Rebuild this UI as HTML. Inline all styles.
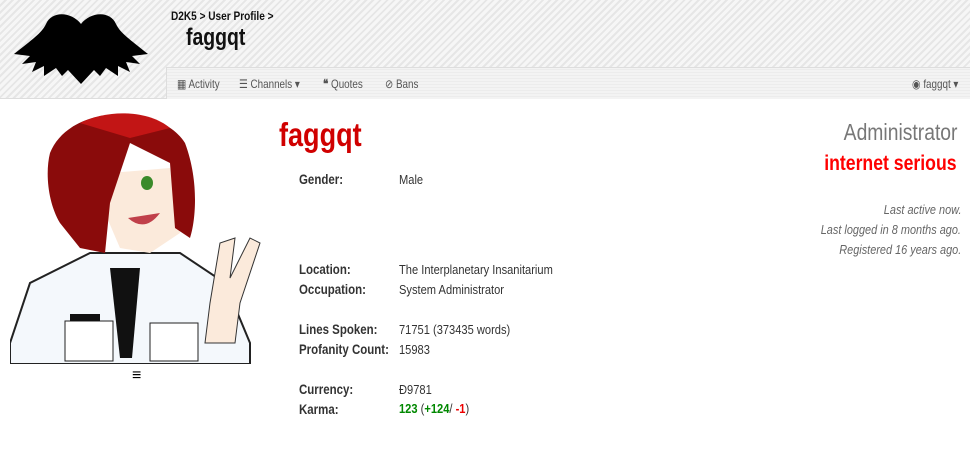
<!DOCTYPE html>
<html><head><meta charset="utf-8"><style>
*{margin:0;padding:0;box-sizing:border-box}
body{width:970px;height:459px;overflow:hidden;background:#fff;font-family:"Liberation Sans",sans-serif;color:#333;position:relative}
.hdr{position:absolute;left:0;top:0;width:970px;height:99px;background:repeating-linear-gradient(135deg,#f6f6f6 0 3px,#e6e6e6 3px 5px);border-bottom:1px solid #ddd}
.nav{position:absolute;left:166px;top:67px;width:804px;height:32px;background:repeating-linear-gradient(0deg,#f3f3f3 0 2px,#ececec 2px 3px);border-top:1px solid #ddd;border-left:1px solid #ddd;font-size:12px;color:#555}
.nav span{position:absolute;top:9px;white-space:nowrap;transform:scaleX(.82);transform-origin:left}
.a{position:absolute;white-space:nowrap;transform:scaleX(.84);transform-origin:left}
.r{transform-origin:right}
.lbl{font-weight:bold;font-size:14px;color:#333;left:299px;transform:scaleX(.82)}
.val{font-size:13px;color:#333;left:399px;transform:scaleX(.855)}
.it{font-style:italic;font-size:13px;color:#666;right:9px;text-align:right}
</style></head><body>
<div class="hdr"></div>
<svg style="position:absolute;left:12px;top:12px" width="138" height="72" viewBox="0 0 138 72">
<path d="M69 12 C60 0 40 -2 34 12 C30 20 25 24 2 42 L18 44 L10 52 L24 50 L20 60 L32 54 L32 64 L44 56 L50 64 L56 58 L69 72 L82 58 L88 64 L94 56 L106 64 L106 54 L118 60 L114 50 L128 52 L120 44 L136 42 C113 24 108 20 104 12 C98 -2 78 0 69 12Z" fill="#000"/>
</svg>
<div class="a" style="left:171px;top:9px;font-size:12px;font-weight:bold;color:#111">D2K5 &gt; User Profile &gt;</div>
<div class="a" style="left:186px;top:24px;font-size:24px;font-weight:bold;color:#111;transform:scaleX(.81)">faggqt</div>
<div class="nav">
<span style="left:10px">▦ Activity</span>
<span style="left:72px">☰ Channels ▾</span>
<span style="left:156px"><b>❝</b> Quotes</span>
<span style="left:218px">⊘ Bans</span>
<span style="left:745px">◉ faggqt ▾</span>
</div>
<svg style="position:absolute;left:10px;top:113px" width="252" height="251" viewBox="0 0 252 251">
<path d="M0 230 L20 170 L80 140 L170 140 L215 170 L240 230 L240 251 L0 251Z" fill="#f4f8fc" stroke="#222" stroke-width="2"/>
<path d="M100 155 L130 155 L122 245 L110 245Z" fill="#111"/>
<rect x="55" y="208" width="48" height="40" fill="#fff" stroke="#222"/>
<rect x="140" y="210" width="48" height="38" fill="#fff" stroke="#222"/>
<rect x="60" y="201" width="30" height="7" fill="#111"/>
<path d="M100 60 L160 55 L170 120 L140 140 L110 135 L95 100Z" fill="#fbeadb"/>
<path d="M40 40 C60 -10 150 -10 175 30 C190 70 185 110 180 125 L165 115 L160 50 L120 30 L100 90 L95 140 L70 135 L50 110 C38 90 35 60 40 40Z" fill="#8a0b0b"/>
<path d="M70 10 C100 -5 140 -2 160 15 L120 25Z" fill="#c21515"/>
<ellipse cx="137" cy="70" rx="6" ry="7" fill="#3a8a2a"/>
<path d="M118 105 Q135 120 150 100Z" fill="#c0404a"/>
<path d="M200 190 L210 130 L225 125 L220 165 L240 125 L250 130 L230 190 L225 230 L195 230Z" fill="#fbeadb" stroke="#333"/>
</svg>
<div class="a" style="left:132px;top:367px;font-size:16px;font-weight:bold;color:#000;transform:none">≡</div>
<div class="a" style="left:279px;top:116px;font-size:33px;font-weight:bold;color:#d00000;transform:scaleX(.82)">faggqt</div>
<div class="a lbl" style="top:171px">Gender:</div><div class="a val" style="top:172px">Male</div>
<div class="a lbl" style="top:261px">Location:</div><div class="a val" style="top:262px">The Interplanetary Insanitarium</div>
<div class="a lbl" style="top:281px">Occupation:</div><div class="a val" style="top:282px">System Administrator</div>
<div class="a lbl" style="top:321px">Lines Spoken:</div><div class="a val" style="top:322px">71751 (373435 words)</div>
<div class="a lbl" style="top:341px">Profanity Count:</div><div class="a val" style="top:342px">15983</div>
<div class="a lbl" style="top:381px">Currency:</div><div class="a val" style="top:382px">Đ9781</div>
<div class="a lbl" style="top:401px">Karma:</div><div class="a val" style="top:401px"><b style="color:#080">123</b> (<b style="color:#080">+124</b>/ <b style="color:#e00">-1</b>)</div>
<div class="a r" style="right:13px;top:119px;font-size:23px;color:#777">Administrator</div>
<div class="a r" style="right:13px;top:152px;font-size:21px;font-weight:bold;color:#f00">internet serious</div>
<div class="a it r" style="top:202px">Last active now.</div>
<div class="a it r" style="top:222px">Last logged in 8 months ago.</div>
<div class="a it r" style="top:242px">Registered 16 years ago.</div>
</body></html>
